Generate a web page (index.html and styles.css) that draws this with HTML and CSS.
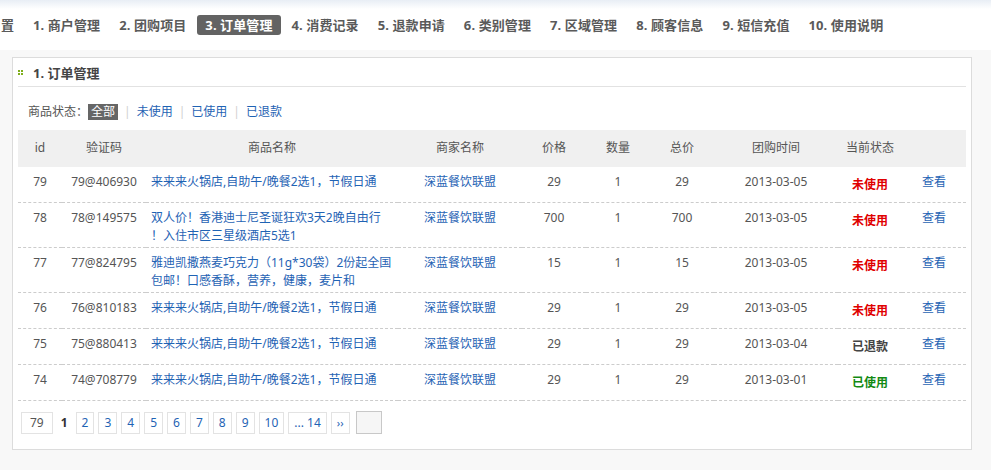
FILE: index.html
```html
<!DOCTYPE html>
<html lang="zh-CN">
<head>
<meta charset="utf-8">
<title>订单管理</title>
<link rel="stylesheet" href="styles.css">
</head>
<body>
<div class="header">
  <ul class="nav">
    <li class="nav-item cut"><span>0. 系统设置</span></li>
    <li class="nav-item">1. 商户管理</li>
    <li class="nav-item">2. 团购项目</li>
    <li class="nav-item active">3. 订单管理</li>
    <li class="nav-item">4. 消费记录</li>
    <li class="nav-item">5. 退款申请</li>
    <li class="nav-item">6. 类别管理</li>
    <li class="nav-item">7. 区域管理</li>
    <li class="nav-item">8. 顾客信息</li>
    <li class="nav-item">9. 短信充值</li>
    <li class="nav-item">10. 使用说明</li>
  </ul>
</div>
<div class="main">
  <div class="panel">
    <div class="panel-title">
      <span class="title-icon"><i></i><i></i><i></i><i></i></span>
      <span>1. 订单管理</span>
    </div>
    <div class="filter">
      <span class="filter-label">商品状态：</span>
      <span class="filter-current">全部</span>
      <span class="sep">|</span>
      <a class="link">未使用</a>
      <span class="sep">|</span>
      <a class="link">已使用</a>
      <span class="sep">|</span>
      <a class="link">已退款</a>
    </div>
    <table class="orders">
      <colgroup>
        <col class="c-id"><col class="c-code"><col class="c-name"><col class="c-shop">
        <col class="c-num"><col class="c-num"><col class="c-num"><col class="c-date">
        <col class="c-num"><col class="c-num">
      </colgroup>
      <thead>
        <tr>
          <th>id</th><th>验证码</th><th>商品名称</th><th>商家名称</th><th>价格</th>
          <th>数量</th><th>总价</th><th>团购时间</th><th>当前状态</th><th></th>
        </tr>
      </thead>
      <tbody>
        <tr>
          <td>79</td><td>79@406930</td>
          <td class="name"><a class="link">来来来火锅店,自助午/晚餐2选1，节假日通</a></td>
          <td><a class="link">深蓝餐饮联盟</a></td>
          <td>29</td><td>1</td><td>29</td><td>2013-03-05</td>
          <td><span class="status unused">未使用</span></td>
          <td><a class="link">查看</a></td>
        </tr>
        <tr>
          <td>78</td><td>78@149575</td>
          <td class="name"><a class="link">双人价！香港迪士尼圣诞狂欢3天2晚自由行<br>！入住市区三星级酒店5选1</a></td>
          <td><a class="link">深蓝餐饮联盟</a></td>
          <td>700</td><td>1</td><td>700</td><td>2013-03-05</td>
          <td><span class="status unused">未使用</span></td>
          <td><a class="link">查看</a></td>
        </tr>
        <tr>
          <td>77</td><td>77@824795</td>
          <td class="name"><a class="link">雅迪凯撒燕麦巧克力（11g*30袋）2份起全国<br>包邮！口感香酥，营养，健康，麦片和</a></td>
          <td><a class="link">深蓝餐饮联盟</a></td>
          <td>15</td><td>1</td><td>15</td><td>2013-03-05</td>
          <td><span class="status unused">未使用</span></td>
          <td><a class="link">查看</a></td>
        </tr>
        <tr>
          <td>76</td><td>76@810183</td>
          <td class="name"><a class="link">来来来火锅店,自助午/晚餐2选1，节假日通</a></td>
          <td><a class="link">深蓝餐饮联盟</a></td>
          <td>29</td><td>1</td><td>29</td><td>2013-03-05</td>
          <td><span class="status unused">未使用</span></td>
          <td><a class="link">查看</a></td>
        </tr>
        <tr>
          <td>75</td><td>75@880413</td>
          <td class="name"><a class="link">来来来火锅店,自助午/晚餐2选1，节假日通</a></td>
          <td><a class="link">深蓝餐饮联盟</a></td>
          <td>29</td><td>1</td><td>29</td><td>2013-03-04</td>
          <td><span class="status refunded">已退款</span></td>
          <td><a class="link">查看</a></td>
        </tr>
        <tr>
          <td>74</td><td>74@708779</td>
          <td class="name"><a class="link">来来来火锅店,自助午/晚餐2选1，节假日通</a></td>
          <td><a class="link">深蓝餐饮联盟</a></td>
          <td>29</td><td>1</td><td>29</td><td>2013-03-01</td>
          <td><span class="status used">已使用</span></td>
          <td><a class="link">查看</a></td>
        </tr>
      </tbody>
    </table>
    <div class="pager">
      <span class="pg total">79</span>
      <span class="pg-current">1</span>
      <a class="pg">2</a>
      <a class="pg">3</a>
      <a class="pg">4</a>
      <a class="pg">5</a>
      <a class="pg">6</a>
      <a class="pg">7</a>
      <a class="pg">8</a>
      <a class="pg">9</a>
      <a class="pg">10</a>
      <a class="pg">... 14</a>
      <a class="pg next">&rsaquo;&rsaquo;</a>
      <span class="pg-input"></span>
    </div>
  </div>
</div>
</body>
</html>
```
FILE: styles.css
```css
* { box-sizing: border-box; }

body {
  margin: 0;
  background: #f8f8f8;
  font-family: "Noto Sans", "Noto Sans CJK SC", sans-serif;
  font-size: 12px;
  color: #555;
}

.header {
  height: 50px;
  padding-top: 15px;
  background: linear-gradient(#e8eef5 0, #ffffff 9px);
}

.nav {
  display: flex;
  list-style: none;
  margin: 0;
  padding: 0 0 0 1px;
}

.nav-item {
  padding: 0 8px;
  margin-right: 3px;
  line-height: 20px;
  height: 20px;
  font-size: 13px;
  font-weight: bold;
  color: #5a5a5a;
  border-radius: 3px;
  white-space: nowrap;
  letter-spacing: 0.1px;
}

.nav-item.cut {
  width: 13px;
  padding: 0;
  margin-right: 11px;
  overflow: hidden;
  display: flex;
  justify-content: flex-end;
}

.nav-item.active {
  background: #636363;
  color: #fff;
}

.main {
  padding: 7px 19px 20px 12px;
}

.panel {
  background: #fff;
  border: 1px solid #dcdcdc;
  padding: 0 5px 15px;
}

.panel-title {
  height: 29px;
  display: flex;
  align-items: center;
  border-bottom: 1px solid #e2e2e2;
  font-size: 13px;
  font-weight: bold;
  color: #444;
}

.title-icon {
  display: grid;
  grid-template-columns: 2px 2px;
  grid-template-rows: 2px 2px;
  gap: 1px;
  margin-right: 10px;
}

.title-icon i {
  display: block;
  background: #7fae1c;
}

.filter {
  display: flex;
  align-items: center;
  padding: 17px 0 10px 10px;
  line-height: 16px;
}

.filter-current {
  background: #666;
  color: #fff;
  padding: 0 3px;
}

.sep {
  color: #d0d0d0;
  margin: 0 6px;
}

.link {
  color: #1f63b4;
  text-decoration: none;
}

.orders {
  width: 100%;
  border-collapse: separate;
  border-spacing: 0;
  table-layout: fixed;
}

.c-id { width: 44px; }
.c-code { width: 84px; }
.c-name { width: 252px; }
.c-shop { width: 124px; }
.c-num { width: 64px; }
.c-date { width: 124px; }

.orders th {
  background: #f0f0f0;
  font-weight: normal;
  color: #555;
  height: 37px;
  line-height: 18px;
  padding: 9px 0 10px;
  text-align: center;
}

.orders td {
  padding: 6px 0 2px;
  line-height: 18px;
  text-align: center;
  vertical-align: top;
  border-bottom: 1px dashed #cccccc;
  white-space: nowrap;
}

.orders td.name {
  text-align: left;
  padding-left: 5px;
}

.status {
  display: block;
  height: 27px;
  padding: 3px 0 6px;
  font-weight: bold;
}

.status.unused { color: #e00000; }
.status.refunded { color: #444; }
.status.used { color: #138a13; }

.pager {
  display: flex;
  align-items: center;
  gap: 4px;
  margin-top: 10px;
  padding-left: 3px;
}

.pg {
  height: 22px;
  line-height: 20px;
  padding: 0 5px;
  border: 1px solid #e3e3e3;
  background: #fff;
  color: #1f63b4;
  text-decoration: none;
}

.pg.total {
  padding: 0 8px;
  color: #555;
}

.pg.next {
  font-size: 11px;
  padding: 0 5px;
}

.pg-current {
  padding: 0 4px;
  font-weight: bold;
  color: #333;
}

.pg-input {
  width: 26px;
  height: 23px;
  margin-left: 2px;
  border: 1px solid #c8c8c8;
  background: #f6f6f6;
}
```
